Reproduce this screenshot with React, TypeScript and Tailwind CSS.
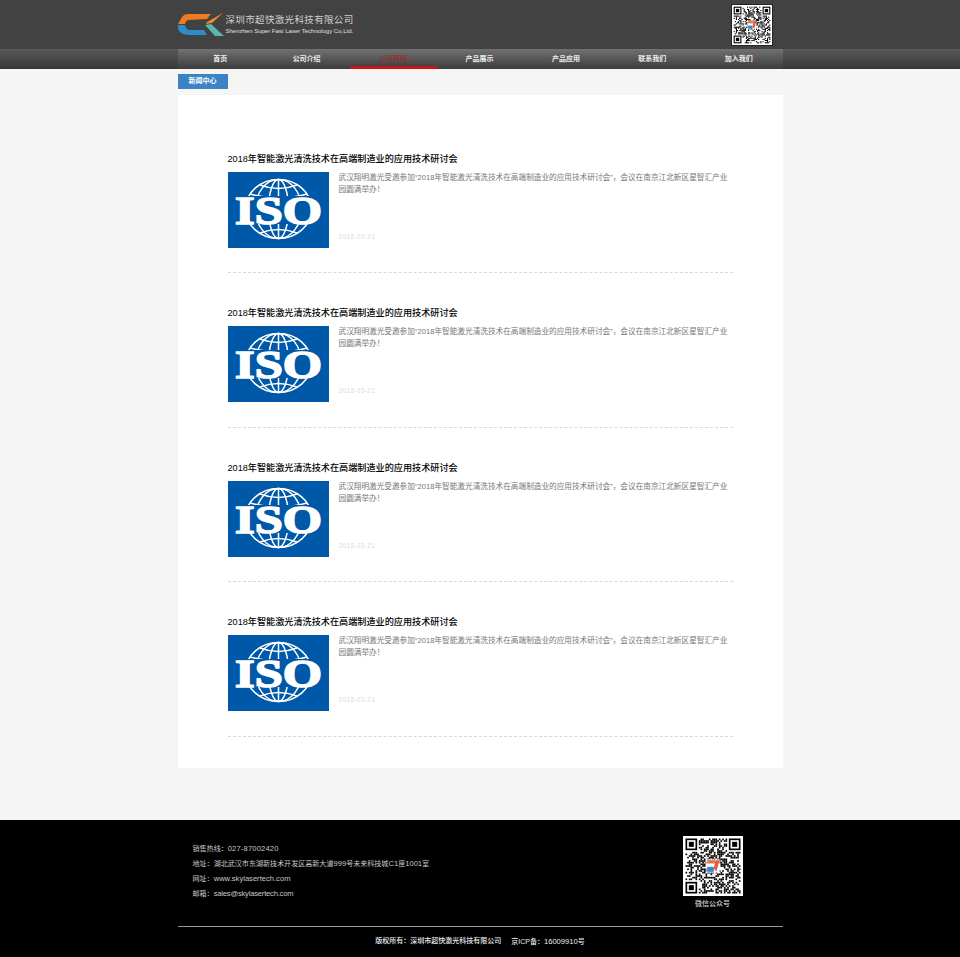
import React from 'react';

const FONT = 'font-["Liberation_Sans","Noto_Sans_CJK_SC",sans-serif]';
const NAV = ['首页', '公司介绍', '公司新闻', '产品展示', '产品应用', '联系我们', '加入我们'];
const TITLE = '2018年智能激光清洗技术在高端制造业的应用技术研讨会';
const DESC = '武汉翔明激光受邀参加“2018年智能激光清洗技术在高端制造业的应用技术研讨会”，会议在南京江北新区星智汇产业园圆满举办！';

function Logo() {
  return (
    <svg width="46" height="24" viewBox="0 0 46 24" className="shrink-0">
      <path d="M0 11 L4 4 Q6 1 11 1 L33 1 L29 6 L11 7 Q8 7 7 11 Z" fill="#ee7b22" />
      <path d="M29 9 L45 0 L34 10 L28 11 Z" fill="#f08a2c" />
      <path d="M0 12 L7 12 Q8 17 12 17 L26 17 L29 22 L12 22 Q5 22 2 19 L0 16 Z" fill="#2f8ccb" />
      <path d="M27 12 L33 11 L46 23 L37 23 Z" fill="#5fb3b0" />
    </svg>
  );
}

function Iso() {
  return (
    <svg width="101" height="76" viewBox="0 0 101 76" className="shrink-0">
      <rect width="101" height="76" fill="#0058a9" />
      <g fill="none" stroke="#fff" strokeWidth="1.5">
        <ellipse cx="50.5" cy="37" rx="33" ry="29.5" />
        <ellipse cx="50.5" cy="37" rx="23" ry="29.5" />
        <ellipse cx="50.5" cy="37" rx="10" ry="29.5" />
        <path d="M50.5 8 V66" />
        <path d="M32 13 Q50.5 20 69 13" />
        <path d="M22 22 Q50.5 30 79 22" />
        <path d="M32 61 Q50.5 54 69 61" />
        <path d="M22 52 Q50.5 44 79 52" />
      </g>
      <rect x="4" y="24" width="93" height="28" fill="#0058a9" />
      <text
        x="7"
        y="52"
        fontSize="40"
        fontWeight="700"
        fill="#fff"
        stroke="#fff"
        strokeWidth="1.6"
        textLength="87"
        lengthAdjust="spacingAndGlyphs"
        fontFamily="Liberation Serif, serif"
      >
        ISO
      </text>
    </svg>
  );
}

// pseudo random modules, the code itself can't be read in the picture
function Qr({ size, seed }: { size: number; seed: number }) {
  const n = 33;
  const cells: React.ReactElement[] = [];
  let s = seed;
  const inFinder = (x: number, y: number) =>
    (x < 8 && y < 8) || (x >= n - 8 && y < 8) || (x < 8 && y >= n - 8);
  for (let y = 0; y < n; y++) {
    for (let x = 0; x < n; x++) {
      s = (s * 1103515245 + 12345) & 0x7fffffff;
      if (inFinder(x, y)) continue;
      if ((s >> 16) % 100 < 50) cells.push(<rect key={`${x}-${y}`} x={x} y={y} width="1" height="1" fill="#000" />);
    }
  }
  const finder = (x: number, y: number) => (
    <g key={`f${x}${y}`}>
      <rect x={x} y={y} width="7" height="7" fill="#000" />
      <rect x={x + 1} y={y + 1} width="5" height="5" fill="#fff" />
      <rect x={x + 2} y={y + 2} width="3" height="3" fill="#000" />
    </g>
  );
  return (
    <svg width={size} height={size} viewBox="-1.5 -1.5 36 36" className="shrink-0">
      <rect x="-1.5" y="-1.5" width="36" height="36" fill="#fff" />
      {cells}
      {finder(0, 0)}
      {finder(n - 7, 0)}
      {finder(0, n - 7)}
      <rect x="12.5" y="12.5" width="8" height="8" fill="#fff" />
      <rect x="13" y="13" width="5" height="2" fill="#e8773a" />
      <rect x="13" y="17" width="4" height="3" fill="#2f8ccb" />
      <path d="M18 13 L20.5 13 L18.5 20 L17 18 Z" fill="#e25d4a" />
    </svg>
  );
}

function NewsItem() {
  return (
    <div className="box-border h-[154.4px] border-b border-dashed border-[#d8d8d8] pt-8">
      <h3 className="h-[14px] translate-y-[0.5px] text-[9.15px] leading-[14px] font-medium text-black">{TITLE}</h3>
      <div className="mt-[7px] flex gap-[10px]">
        <Iso />
        <div className="flex h-[71px] flex-col justify-between">
          <p className="text-[7.65px] leading-3 text-[#777]">{DESC}</p>
          <span className="text-[6.6px] leading-3 tracking-[0.3px] text-[#dcdcdc]">2018-03-21</span>
        </div>
      </div>
    </div>
  );
}

export default function App() {
  return (
    <div className={`${FONT} min-h-[957px] bg-[#f5f5f5] opacity-[0.999]`}>
      <header className="h-[49px] bg-[#424242]">
        <div className="mx-auto flex h-[49px] w-[605px] items-center">
          <div className="flex items-center gap-[2px]">
            <Logo />
            <div className="flex flex-col">
              <span className="text-[9.5px] leading-[12px] tracking-[0.35px] whitespace-nowrap text-[#d0d0d0]">深圳市超快激光科技有限公司</span>
              <span className="text-[6px] leading-[10px] whitespace-nowrap text-[#e0e0e0]">Shenzhen Super Fast Laser Technology Co,Ltd.</span>
            </div>
          </div>
          <div className="ml-auto mr-[10px] mt-[1px] border border-[#222]">
            <Qr size={40} seed={77} />
          </div>
        </div>
      </header>

      <nav className="h-5 bg-gradient-to-b from-[#5a5a5a] to-[#383838]">
        <ul className="mx-auto grid h-5 w-[605px] grid-cols-7 bg-gradient-to-b from-[#727272] to-[#3c3c3c]">
          {NAV.map((label, i) => (
            <li
              key={label}
              className={
                i === 2
                  ? 'box-border flex h-5 items-center justify-center border-b-[3px] border-[#c4161c] pt-[3px] pr-[1px] text-[7px] font-medium text-[#a02a2a]'
                  : 'flex h-5 items-center justify-center pr-[1px] text-[7px] font-bold text-[#eeeeee]'
              }
            >
              {label}
            </li>
          ))}
        </ul>
      </nav>

      <main className="mx-auto w-[605px] pt-[5px]">
        <div className="flex h-[15px] w-[50px] items-center justify-center bg-[#3c83c6] text-[7px] font-bold text-white">新闻中心</div>
        <div className="mt-[6px] box-border h-[673px] bg-white px-[50px] pt-6">
          <NewsItem />
          <NewsItem />
          <NewsItem />
          <NewsItem />
        </div>
      </main>

      <footer className="mt-[52px] h-[137px] bg-black">
        <div className="mx-auto w-[605px]">
          <div className="flex h-[106px] justify-between pl-[15px] pr-10">
            <ul className="pt-[21px] text-[7.05px] leading-[15px] text-[#c8c8c8]">
              <li>销售热线：<span className="text-[7.6px] tracking-[0.15px]">027-87002420</span></li>
              <li>地址：湖北武汉市东湖新技术开发区高新大道<span className="text-[7.6px]">999</span>号未来科技城<span className="text-[7.6px]">C1</span>座<span className="text-[7.6px]">1001</span>室</li>
              <li>网址：<span className="text-[7.6px]">www.skylasertech.com</span></li>
              <li>邮箱：<span className="text-[7.6px] tracking-[-0.2px]">sales@skylasertech.com</span></li>
            </ul>
            <div className="flex flex-col items-center pt-4">
              <Qr size={60} seed={1234} />
              <span className="mt-[3px] text-[7px] leading-[10px] font-medium text-[#d8d8d8]">微信公众号</span>
            </div>
          </div>
          <div className="flex h-[31px] items-center justify-center gap-[10px] border-t border-[#999] pb-[1px] text-[7px] font-medium text-[#eeeeee]">
            <span>版权所有：深圳市超快激光科技有限公司</span>
            <span>京ICP备：<span className="text-[7.6px]">16009910</span>号</span>
          </div>
        </div>
      </footer>
    </div>
  );
}
